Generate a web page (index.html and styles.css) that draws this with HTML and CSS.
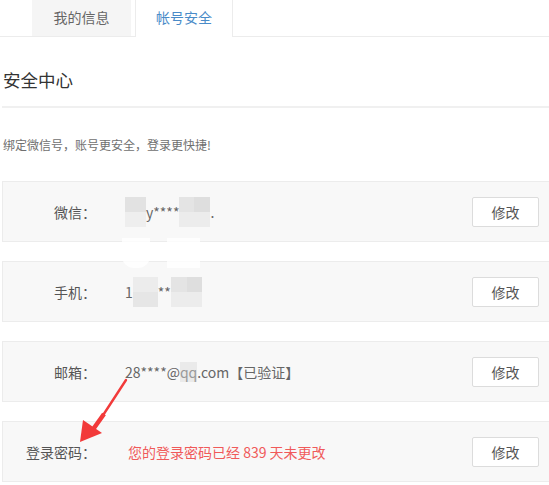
FILE: index.html
```html
<!DOCTYPE html>
<html lang="zh">
<head>
<meta charset="utf-8">
<link rel="stylesheet" href="styles.css">
</head>
<body>
<div class="page">
  <div class="tabs">
    <div class="tab">我的信息</div>
    <div class="tab active">帐号安全</div>
  </div>
  <div class="main">
    <h2 class="title">安全中心</h2>
    <p class="tip">绑定微信号，账号更安全，登录更快捷!</p>
    <div class="list">
      <div class="card">
        <span class="label">微信：</span>
        <span class="value"><span class="hide w1"></span>y****<span class="hide w2"></span>.</span>
        <button class="btn">修改</button>
      </div>
      <div class="card">
        <span class="label">手机：</span>
        <span class="value">1<span class="hide w3"></span>**<span class="hide w2"></span></span>
        <button class="btn">修改</button>
      </div>
      <div class="card">
        <span class="label">邮箱：</span>
        <span class="value">28****@<span class="blur">qq</span>.com【已验证】</span>
        <button class="btn">修改</button>
      </div>
      <div class="card">
        <span class="label">登录密码：</span>
        <span class="value warn">您的登录密码已经 839 天未更改</span>
        <button class="btn">修改</button>
      </div>
    </div>
  </div>
  <div class="mask m1"></div>
  <div class="mask m2"></div>
  <svg class="arrow" width="60" height="80" viewBox="0 0 60 80">
    <path d="M52 8 L22 54" stroke="#f23a3a" stroke-width="2.4" stroke-linecap="round" fill="none"/>
    <path d="M30 42 L15 63" stroke="#f23a3a" stroke-width="4.5" fill="none"/>
    <polygon points="6,70 9,48 28,61" fill="#f23a3a"/>
  </svg>
</div>
</body>
</html>
```
FILE: styles.css
```css
html, body {
  margin: 0;
  padding: 0;
  background: #fff;
  overflow: hidden;
}
.page {
  position: relative;
  width: 549px;
  height: 485px;
  overflow: hidden;
  font-family: "Noto Sans CJK SC", "Microsoft YaHei", sans-serif;
  color: #555;
}
.tabs {
  display: flex;
  height: 36px;
  border-bottom: 1px solid #ececec;
  padding-left: 32px;
}
.tab {
  width: 99px;
  height: 36px;
  background: #f5f5f5;
  font-size: 14px;
  line-height: 34px;
  text-align: center;
  color: #666;
}
.tab.active {
  width: 96px;
  margin-left: 4px;
  background: #fff;
  border-left: 1px solid #ececec;
  border-right: 1px solid #ececec;
  height: 37px;
  color: #4a8bc8;
}
.main {
  margin-left: 2px;
  width: 570px;
}
.title {
  margin: 0;
  height: 69px;
  border-bottom: 2px solid #f0f0f0;
  font-size: 17.5px;
  font-weight: normal;
  line-height: 86px;
  padding-left: 1px;
  color: #333;
}
.tip {
  margin: 0;
  height: 73px;
  font-size: 12px;
  line-height: 74px;
  padding-left: 1px;
  color: #6f6f6f;
}
.list {
  display: flex;
  flex-direction: column;
  gap: 19px;
}
.card {
  position: relative;
  display: flex;
  align-items: center;
  height: 59px;
  background: #f8f8f8;
  border: 1px solid #ececec;
  padding-right: 32px;
}
.label {
  width: 93px;
  text-align: right;
  font-size: 14px;
  color: #555;
  flex: none;
}
.value {
  margin-left: 29px;
  font-size: 14px;
  color: #666;
  display: flex;
  align-items: center;
}
.warn {
  color: #f05a5a;
  margin-left: 32px;
}
.hide {
  display: inline-block;
  height: 30px;
  background: linear-gradient(#e2e2e2 0 50%, #eeeeee 50% 100%);
}
.w1 { width: 21px; }
.w2 { width: 31px; background: linear-gradient(90deg, #e4e4e4 0 50%, #dedede 50%) top/100% 50% no-repeat, #ececec; }
.w3 { width: 25px; background: linear-gradient(#ececec 0 50%, #e6e6e6 50% 100%); }
.blur {
  color: #999;
  background: #eaeaea;
}
.btn {
  margin-left: auto;
  width: 67px;
  height: 30px;
  background: #fff;
  border: 1px solid #dcdcdc;
  border-radius: 2px;
  font-family: inherit;
  font-size: 14px;
  color: #555;
  padding: 0;
}
.mask {
  position: absolute;
  background: rgba(255,255,255,0.8);
}
.m1 { left: 122px; top: 238px; width: 28px; height: 30px; border-radius: 0 0 12px 12px; }
.m2 { left: 167px; top: 238px; width: 33px; height: 30px; }
.arrow {
  position: absolute;
  left: 74px;
  top: 372px;
}
```
